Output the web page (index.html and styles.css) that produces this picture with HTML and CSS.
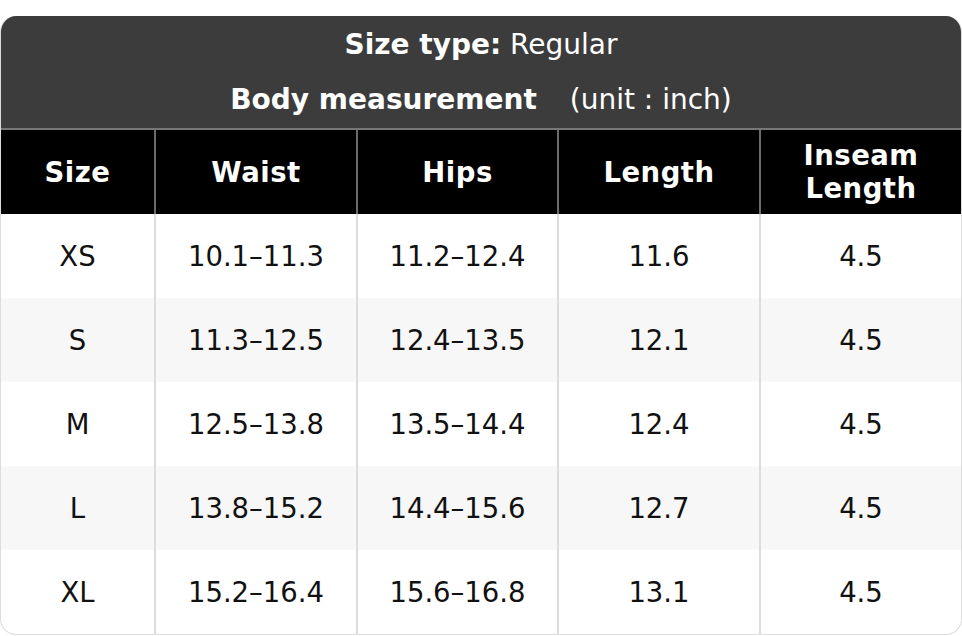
FILE: index.html
```html
<!DOCTYPE html>
<html>
<head>
<meta charset="utf-8">
<link rel="stylesheet" href="styles.css">
</head>
<body>
<div class="chart">
  <div class="title">
    <div class="title-line"><b>Size type:</b> Regular</div>
    <div class="title-line"><b>Body measurement</b><span class="unit">(unit : inch)</span></div>
  </div>
  <table class="sizes">
    <colgroup>
      <col class="c1"><col class="c2"><col class="c3"><col class="c4"><col class="c5">
    </colgroup>
    <thead>
      <tr><th>Size</th><th>Waist</th><th>Hips</th><th>Length</th><th>Inseam<br>Length</th></tr>
    </thead>
    <tbody>
      <tr><td>XS</td><td>10.1–11.3</td><td>11.2–12.4</td><td>11.6</td><td>4.5</td></tr>
      <tr><td>S</td><td>11.3–12.5</td><td>12.4–13.5</td><td>12.1</td><td>4.5</td></tr>
      <tr><td>M</td><td>12.5–13.8</td><td>13.5–14.4</td><td>12.4</td><td>4.5</td></tr>
      <tr><td>L</td><td>13.8–15.2</td><td>14.4–15.6</td><td>12.7</td><td>4.5</td></tr>
      <tr><td>XL</td><td>15.2–16.4</td><td>15.6–16.8</td><td>13.1</td><td>4.5</td></tr>
    </tbody>
  </table>
</div>
</body>
</html>
```
FILE: styles.css
```css
html, body {
  margin: 0;
  padding: 0;
  background: #fff;
}
body {
  font-family: "DejaVu Sans", sans-serif;
  padding-top: 16px;
}
.chart {
  width: 962px;
  box-sizing: border-box;
  border: 1px solid #dcdcdc;
  border-top: none;
  border-radius: 16px;
  overflow: hidden;
}
.title {
  background: #3c3c3c;
  color: #fff;
  height: 114px;
  box-sizing: border-box;
  padding-top: 1px;
  text-align: center;
  font-size: 28px;
  border-bottom: 2px solid #777;
}
.title-line {
  height: 55px;
  line-height: 55px;
}
.unit {
  margin-left: 33px;
}
.sizes {
  width: 100%;
  border-collapse: collapse;
  table-layout: fixed;
  font-size: 27.5px;
}
.c1 { width: 154px; }
.c2 { width: 202px; }
.c3 { width: 201px; }
.c4 { width: 202px; }
.sizes th {
  background: #000;
  color: #fff;
  font-weight: bold;
  font-size: 27.5px;
  height: 84px;
  line-height: 33px;
  padding: 0;
  border-left: 2px solid #6a6a6a;
  letter-spacing: 0.5px;
}
.sizes td {
  height: 84px;
  padding: 0;
  text-align: center;
  color: #111;
  border-left: 2px solid #dcdcdc;
}
.sizes th:first-child, .sizes td:first-child {
  border-left: none;
}
.sizes tbody tr:nth-child(even) td {
  background: #f7f7f7;
}
```
